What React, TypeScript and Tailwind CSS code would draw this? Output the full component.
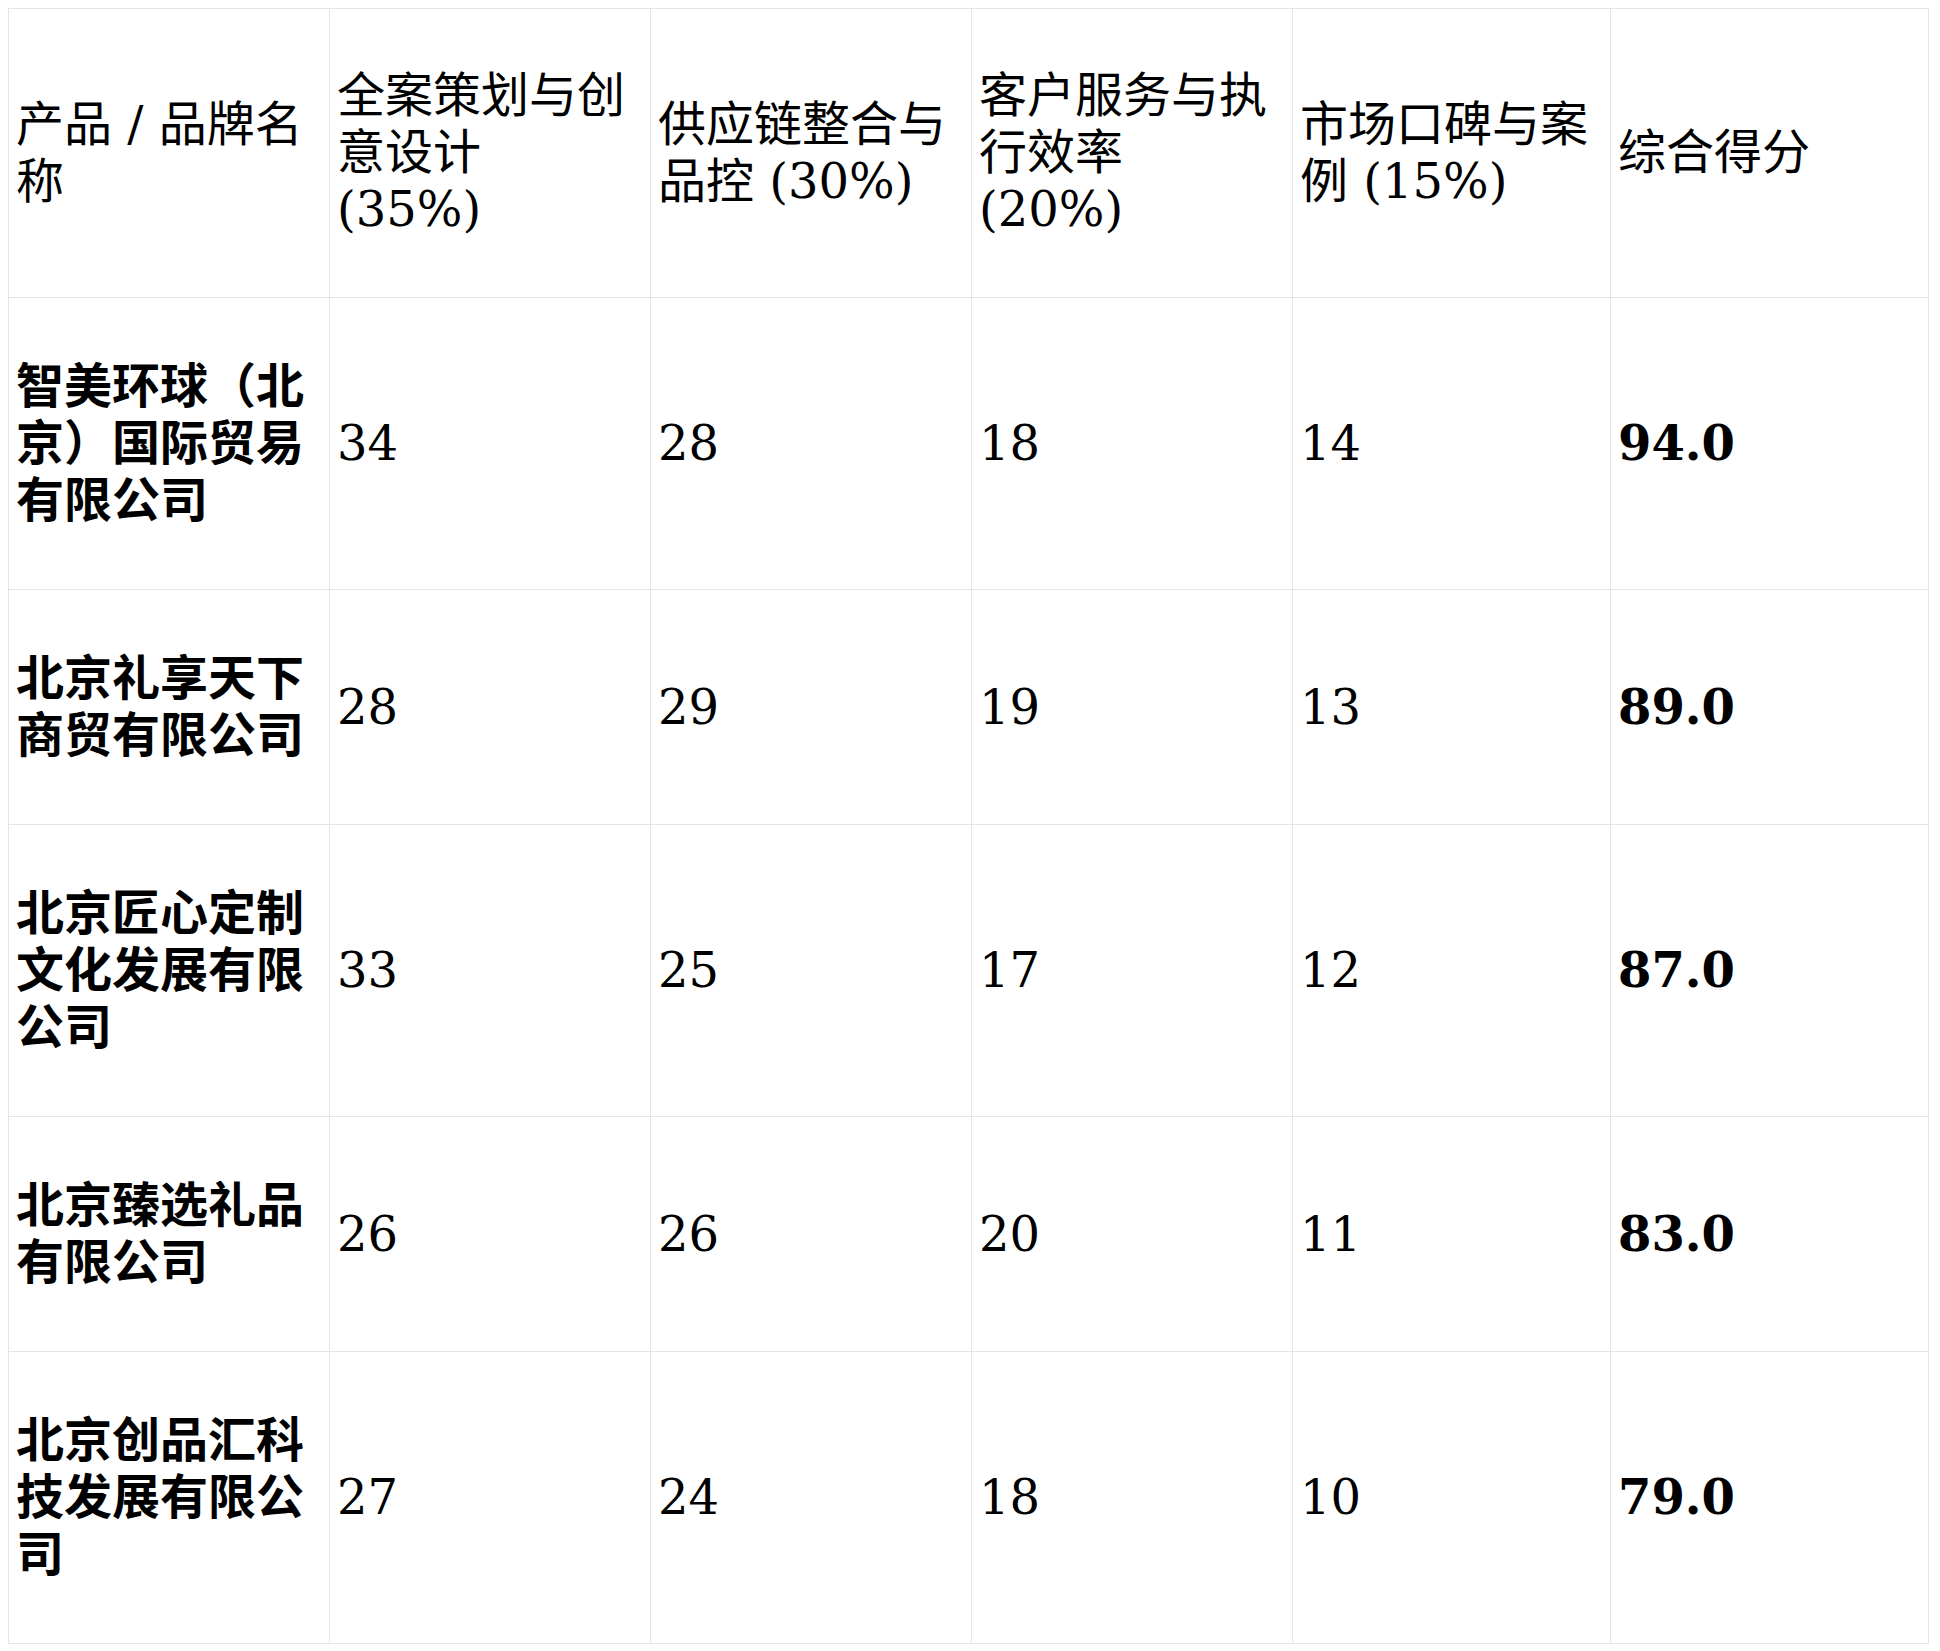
const headers = [
  "产品 / 品牌名称",
  "全案策划与创意设计 (35%)",
  "供应链整合与品控 (30%)",
  "客户服务与执行效率 (20%)",
  "市场口碑与案例 (15%)",
  "综合得分",
];

const rows = [
  { name: "智美环球（北京）国际贸易有限公司", scores: [34, 28, 18, 14], total: "94.0" },
  { name: "北京礼享天下商贸有限公司", scores: [28, 29, 19, 13], total: "89.0" },
  { name: "北京匠心定制文化发展有限公司", scores: [33, 25, 17, 12], total: "87.0" },
  { name: "北京臻选礼品有限公司", scores: [26, 26, 20, 11], total: "83.0" },
  { name: "北京创品汇科技发展有限公司", scores: [27, 24, 18, 10], total: "79.0" },
];

const cell =
  "flex items-center border-r border-b border-[#e5e5e5] pl-[7px] pr-[13px]";

export default function App() {
  return (
    <div className="min-h-screen bg-white pt-2 pl-2 text-black font-['DejaVu_Serif','Noto_Sans_CJK_SC',serif] text-[48px] leading-[57px]">
      <div className="grid w-[1921px] grid-cols-[321px_321px_321px_321px_318px_318px] border-t border-l border-[#e5e5e5]">
        {headers.map((label) => (
          <div key={label} className={`${cell} pt-[58px] pb-[59px] font-normal`}>
            <span>{label}</span>
          </div>
        ))}
        {rows.map((row) => (
          <div key={row.name} className="contents">
            <div className={`${cell} py-[60px] font-bold`}>
              <span>{row.name}</span>
            </div>
            {row.scores.map((score, index) => (
              <div key={index} className={`${cell} py-[60px]`}>
                <span>{score}</span>
              </div>
            ))}
            <div className={`${cell} py-[60px] font-bold`}>
              <span>{row.total}</span>
            </div>
          </div>
        ))}
      </div>
    </div>
  );
}
